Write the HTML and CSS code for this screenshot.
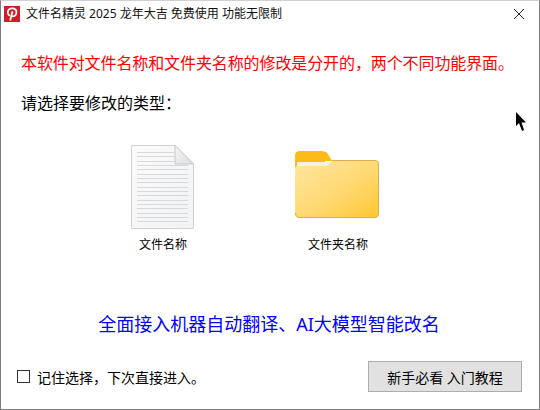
FILE: index.html
```html
<!DOCTYPE html>
<html lang="zh-CN">

<head>
    <meta charset="UTF-8">
    <title>文件名精灵</title>
    <link rel="stylesheet" href="styles.css">
</head>

<body>
    <div class="window">

        <!-- Title bar -->
        <div class="titlebar">
            <svg class="app-icon" width="16" height="16" viewBox="0 0 16 16">
                <rect width="16" height="16" fill="#cb2027" />
                <path d="M5.800 9.800C4.400 8.900 3.800 7.800 3.800 6.400 3.800 4 5.800 2.300 8.300 2.300c2.500 0 4.100 1.700 4.100 3.800 0 2.400-1.400 4.200-3.300 4.200-.8 0-1.400-.4-1.600-1" fill="none" stroke="#fff" stroke-width="1.700" />
                <path d="M8.500 5.200 6.200 14.500" stroke="#fff" stroke-width="1.800" />
            </svg>
            <span class="title">文件名精灵 2025 龙年大吉 免费使用 功能无限制</span>
            <svg class="close" width="10" height="10" viewBox="0 0 10 10">
                <path d="M0 0 10 10M10 0 0 10" stroke="#222" stroke-width="1" fill="none" />
            </svg>
        </div>

        <div class="content">
            <p class="notice">本软件对文件名称和文件夹名称的修改是分开的，两个不同功能界面。</p>
            <p class="prompt">请选择要修改的类型：</p>

            <!-- Type choices -->
            <div class="choices">
                <div class="choice choice-file">
                    <div class="choice-icon">
                        <svg width="63" height="84" viewBox="0 0 63 84">
                            <defs>
                                <linearGradient id="sheet" x1="0" y1="0" x2="1" y2="1">
                                    <stop offset="0" stop-color="#fbfbfb" />
                                    <stop offset="1" stop-color="#f1f2f4" />
                                </linearGradient>
                                <linearGradient id="fold" x1="0" y1="0" x2="1" y2="1">
                                    <stop offset="0" stop-color="#f6f6f6" />
                                    <stop offset="1" stop-color="#dcdcdc" />
                                </linearGradient>
                            </defs>
                            <path d="M.5.500H44L62.500 19V83.500H.5Z" fill="url(#sheet)" stroke="#d2d2d2" />
                            <g stroke="#d6d8db" stroke-width="1">
                                <path d="M6 7.500H43M6 11.500H43M6 16.500H43" />
                                <path d="M6 20.500H57M6 24.500H57M6 29.500H57M6 33.500H57M6 37.500H57M6 42.500H57M6 46.500H57M6 50.500H57M6 55.500H57M6 59.500H57M6 63.500H57M6 68.500H57M6 72.500H57M6 76.500H57" />
                            </g>
                            <path d="M44 .5V19H62.500Z" fill="url(#fold)" stroke="#c8c8c8" />
                        </svg>
                    </div>
                    <span class="choice-label">文件名称</span>
                </div>
                <div class="choice choice-folder">
                    <div class="choice-icon">
                        <svg class="folder-svg" width="84" height="67" viewBox="0 0 84 67">
                            <defs>
                                <linearGradient id="front" x1="0" y1="0" x2="1" y2="1">
                                    <stop offset="0" stop-color="#ffe6a0" />
                                    <stop offset="0.55" stop-color="#ffd871" />
                                    <stop offset="1" stop-color="#ffc72f" />
                                </linearGradient>
                            </defs>
                            <path d="M0 5Q0 0 5 0H26Q31 0 33 3L37 10H30V26H0Z" fill="#fdbb1a" />
                            <path d="M2 12Q2 11 3 11H37L33 17H2Z" fill="#f3f1ec" />
                            <path d="M0 17Q0 15 2 15H31Q33 15 34 13L37 10H81Q84 10 84 13V62Q84 67 79 67H5Q0 67 0 62Z" fill="url(#front)" />
                            <path d="M37 9.500H80Q83.500 9.500 83.500 13V62Q83.500 66.500 79 66.500H5Q.5 66.500.5 62" fill="none" stroke="#dcae4e" />
                        </svg>
                    </div>
                    <span class="choice-label">文件夹名称</span>
                </div>
            </div>

            <p class="promo">全面接入机器自动翻译、AI大模型智能改名</p>

            <!-- Bottom row -->
            <div class="bottom-row">
                <label class="remember">
                    <span class="checkbox"></span>
                    <span>记住选择，下次直接进入。</span>
                </label>
                <button class="tutorial-btn">新手必看 入门教程</button>
            </div>
        </div>

        <!-- Mouse pointer caught in the shot -->
        <svg class="pointer" width="12" height="20" viewBox="0 0 12 20">
            <path d="M0 0V14L3 11 6 19 8 18 5.500 10.500H10Z" fill="#000" />
        </svg>
    </div>
</body>

</html>
```

FILE: styles.css
```css
* {
    box-sizing: border-box;
}

html,
body {
    margin: 0;
    padding: 0;
    background: #fff;
}

body {
    font-family: "Noto Sans", "Noto Sans CJK SC", sans-serif;
    color: #000;
}

.window {
    position: relative;
    width: 540px;
    height: 410px;
    border: 1px solid #7f7f7f;
    border-top-color: #d0d0d0;
    background: #fff;
    display: flex;
    flex-direction: column;
    overflow: hidden;
}

.titlebar {
    display: flex;
    align-items: center;
    height: 25px;
    padding: 0 15px 0 3px;
    flex-shrink: 0;
}

.app-icon {
    flex-shrink: 0;
}

.title {
    margin-left: 6px;
    font-size: 12px;
    line-height: 16px;
    color: #111;
    flex: 1;
}

.content {
    flex: 1;
    display: flex;
    flex-direction: column;
    padding: 0 17px 17px 20px;
}

.notice {
    margin: 25px 0 0;
    font-size: 16px;
    line-height: 24px;
    letter-spacing: -0.1px;
    color: #ff0000;
    white-space: nowrap;
}

.prompt {
    margin: 16px 0 0;
    font-size: 16px;
    line-height: 24px;
}

.choices {
    display: flex;
    margin-top: 30px;
}

.choice {
    display: flex;
    flex-direction: column;
    align-items: center;
}

.choice-file {
    margin-left: 110px;
    width: 64px;
}

.choice-folder {
    margin-left: 100px;
    width: 86px;
}

.choice-icon {
    height: 85px;
    width: 100%;
}

.choice-icon svg {
    display: block;
}

.folder-svg {
    margin-top: 6px;
}

.choice-label {
    margin-top: 7px;
    font-size: 12px;
    line-height: 16px;
    white-space: nowrap;
}

.promo {
    margin: 59px 5px 0 0;
    font-size: 18px;
    line-height: 24px;
    color: #0000ff;
    text-align: center;
    white-space: nowrap;
}

.bottom-row {
    margin-top: auto;
    display: flex;
    align-items: center;
    justify-content: space-between;
}

.remember {
    display: flex;
    align-items: center;
    margin-left: -4px;
    font-size: 14px;
}

.checkbox {
    width: 13px;
    height: 13px;
    border: 1px solid #333;
    background: #fff;
    margin-right: 7px;
}

.tutorial-btn {
    width: 154px;
    height: 31px;
    background: #e1e1e1;
    border: 1px solid #adadad;
    font-family: inherit;
    font-size: 14px;
    color: #000;
    padding: 0;
}

.pointer {
    position: absolute;
    left: 515px;
    top: 111px;
}
```
